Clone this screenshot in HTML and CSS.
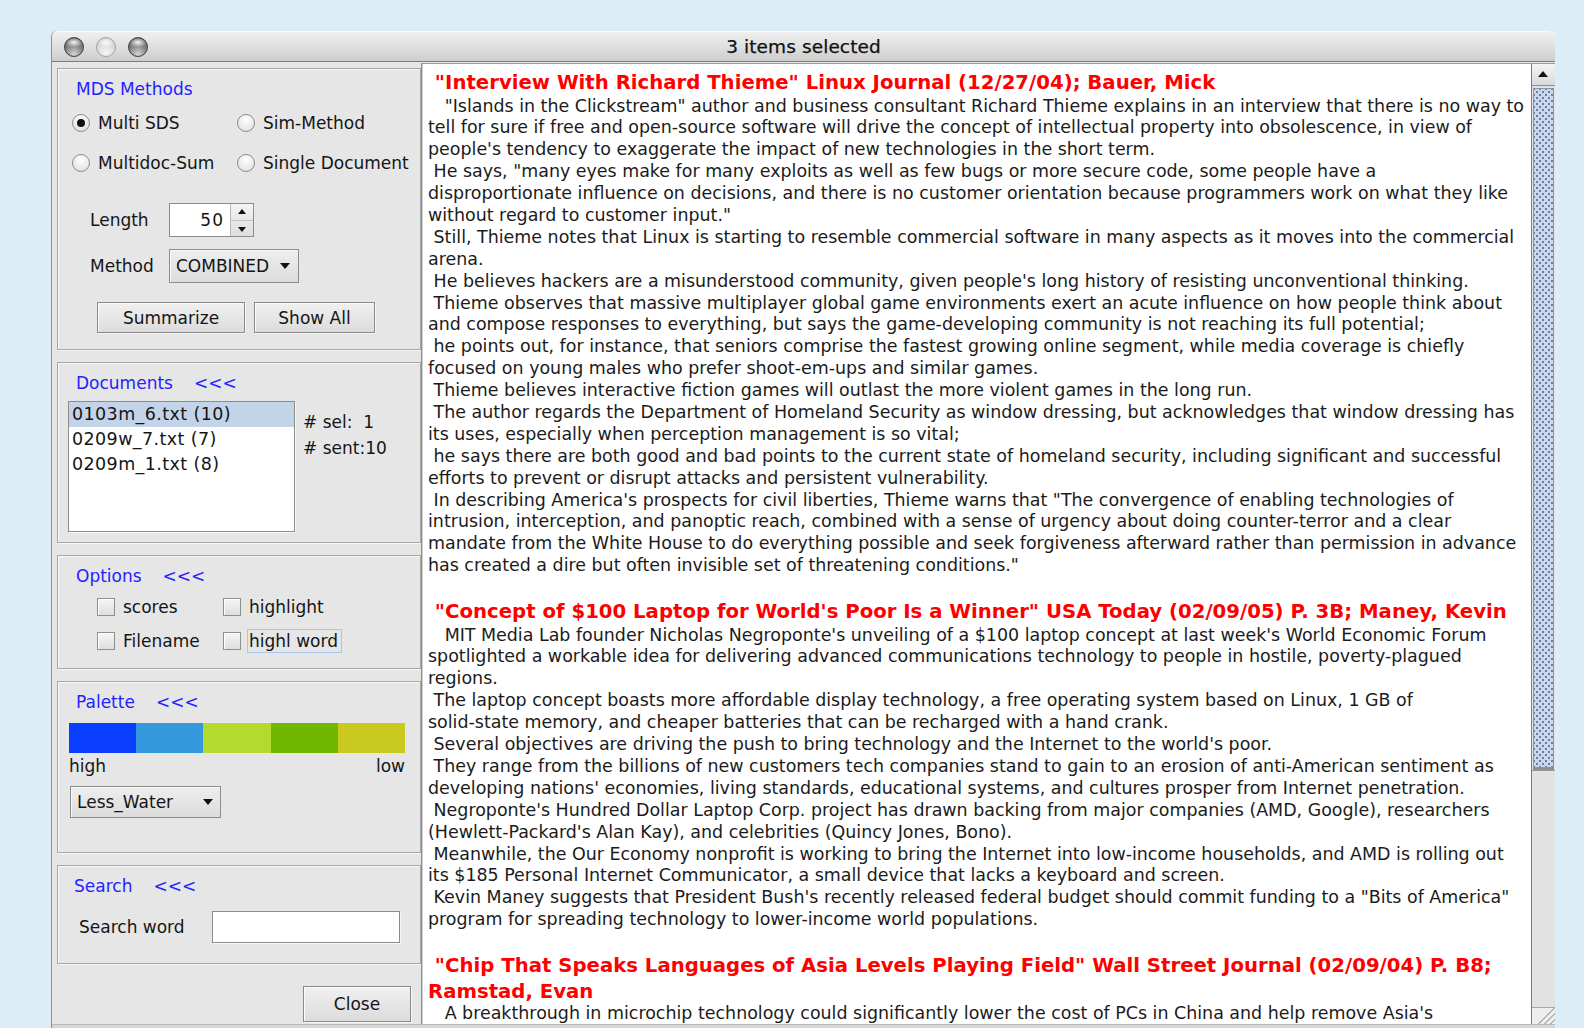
FILE: index.html
```html
<!DOCTYPE html>
<html lang="en">
<head>
<meta charset="utf-8">
<title>3 items selected</title>
<link rel="stylesheet" href="styles.css">
</head>
<body>
<div class="window">
  <header class="titlebar">
    <div class="lights">
      <span class="light light-dark"></span>
      <span class="light light-pale"></span>
      <span class="light light-dark"></span>
    </div>
    <div class="title">3 items selected</div>
  </header>

  <div class="main">
    <aside class="side">
      <section class="group group-mds">
        <div class="group-head"><span>MDS Methods</span></div>
        <div class="radios">
          <label class="radio"><span class="radio-dot is-on"></span>Multi SDS</label>
          <label class="radio"><span class="radio-dot"></span>Sim-Method</label>
          <label class="radio"><span class="radio-dot"></span>Multidoc-Sum</label>
          <label class="radio"><span class="radio-dot"></span>Single Document</label>
        </div>
        <div class="field-row field-first">
          <span class="field-label">Length</span>
          <div class="spinner">
            <span class="spin-value">50</span>
            <span class="spin-btns"><span class="spin-btn spin-up"></span><span class="spin-btn spin-down"></span></span>
          </div>
        </div>
        <div class="field-row">
          <span class="field-label">Method</span>
          <div class="combo combo-method"><span>COMBINED</span><span class="combo-arrow"></span></div>
        </div>
        <div class="actions">
          <button class="btn btn-summarize">Summarize</button>
          <button class="btn btn-showall">Show All</button>
        </div>
      </section>

      <section class="group group-docs">
        <div class="group-head"><span>Documents</span><span>&lt;&lt;&lt;</span></div>
        <div class="docs-body">
          <ul class="doc-list">
            <li class="is-selected">0103m_6.txt (10)</li>
            <li>0209w_7.txt (7)</li>
            <li>0209m_1.txt (8)</li>
          </ul>
          <div class="doc-stats">
            <div class="stat"># sel:  1</div>
            <div class="stat"># sent:10</div>
          </div>
        </div>
      </section>

      <section class="group group-options">
        <div class="group-head"><span>Options</span><span>&lt;&lt;&lt;</span></div>
        <div class="checks">
          <label class="check"><span class="check-box"></span><span>scores</span></label>
          <label class="check"><span class="check-box"></span><span>highlight</span></label>
          <label class="check"><span class="check-box"></span><span>Filename</span></label>
          <label class="check"><span class="check-box"></span><span class="focus-ring">highl word</span></label>
        </div>
      </section>

      <section class="group group-palette">
        <div class="group-head"><span>Palette</span><span>&lt;&lt;&lt;</span></div>
        <div class="palette-bar">
          <span class="swatch sw1"></span>
          <span class="swatch sw2"></span>
          <span class="swatch sw3"></span>
          <span class="swatch sw4"></span>
          <span class="swatch sw5"></span>
        </div>
        <div class="palette-scale"><span>high</span><span>low</span></div>
        <div class="combo combo-palette"><span>Less_Water</span><span class="combo-arrow"></span></div>
      </section>

      <section class="group group-search">
        <div class="group-head head-search"><span>Search</span><span>&lt;&lt;&lt;</span></div>
        <div class="search-row">
          <span class="search-label">Search word</span>
          <span class="search-input"></span>
        </div>
      </section>

      <div class="close-row"><button class="btn btn-close">Close</button></div>
    </aside>

    <div class="pane">
      <div class="doc">
        <div class="hd"> "Interview With Richard Thieme" Linux Journal (12/27/04); Bauer, Mick</div>
        <div class="ln">   "Islands in the Clickstream" author and business consultant Richard Thieme explains in an interview that there is no way to</div>
        <div class="ln">tell for sure if free and open-source software will drive the concept of intellectual property into obsolescence, in view of</div>
        <div class="ln">people's tendency to exaggerate the impact of new technologies in the short term.</div>
        <div class="ln"> He says, "many eyes make for many exploits as well as few bugs or more secure code, some people have a</div>
        <div class="ln">disproportionate influence on decisions, and there is no customer orientation because programmers work on what they like</div>
        <div class="ln">without regard to customer input."</div>
        <div class="ln"> Still, Thieme notes that Linux is starting to resemble commercial software in many aspects as it moves into the commercial</div>
        <div class="ln">arena.</div>
        <div class="ln"> He believes hackers are a misunderstood community, given people's long history of resisting unconventional thinking.</div>
        <div class="ln"> Thieme observes that massive multiplayer global game environments exert an acute influence on how people think about</div>
        <div class="ln">and compose responses to everything, but says the game-developing community is not reaching its full potential;</div>
        <div class="ln"> he points out, for instance, that seniors comprise the fastest growing online segment, while media coverage is chiefly</div>
        <div class="ln">focused on young males who prefer shoot-em-ups and similar games.</div>
        <div class="ln"> Thieme believes interactive fiction games will outlast the more violent games in the long run.</div>
        <div class="ln"> The author regards the Department of Homeland Security as window dressing, but acknowledges that window dressing has</div>
        <div class="ln">its uses, especially when perception management is so vital;</div>
        <div class="ln"> he says there are both good and bad points to the current state of homeland security, including significant and successful</div>
        <div class="ln">efforts to prevent or disrupt attacks and persistent vulnerability.</div>
        <div class="ln"> In describing America's prospects for civil liberties, Thieme warns that "The convergence of enabling technologies of</div>
        <div class="ln">intrusion, interception, and panoptic reach, combined with a sense of urgency about doing counter-terror and a clear</div>
        <div class="ln">mandate from the White House to do everything possible and seek forgiveness afterward rather than permission in advance</div>
        <div class="ln">has created a dire but often invisible set of threatening conditions."</div>
        <div class="gap"></div>
        <div class="hd"> "Concept of $100 Laptop for World's Poor Is a Winner" USA Today (02/09/05) P. 3B; Maney, Kevin</div>
        <div class="ln">   MIT Media Lab founder Nicholas Negroponte's unveiling of a $100 laptop concept at last week's World Economic Forum</div>
        <div class="ln">spotlighted a workable idea for delivering advanced communications technology to people in hostile, poverty-plagued</div>
        <div class="ln">regions.</div>
        <div class="ln"> The laptop concept boasts more affordable display technology, a free operating system based on Linux, 1 GB of</div>
        <div class="ln">solid-state memory, and cheaper batteries that can be recharged with a hand crank.</div>
        <div class="ln"> Several objectives are driving the push to bring technology and the Internet to the world's poor.</div>
        <div class="ln"> They range from the billions of new customers tech companies stand to gain to an erosion of anti-American sentiment as</div>
        <div class="ln">developing nations' economies, living standards, educational systems, and cultures prosper from Internet penetration.</div>
        <div class="ln"> Negroponte's Hundred Dollar Laptop Corp. project has drawn backing from major companies (AMD, Google), researchers</div>
        <div class="ln">(Hewlett-Packard's Alan Kay), and celebrities (Quincy Jones, Bono).</div>
        <div class="ln"> Meanwhile, the Our Economy nonprofit is working to bring the Internet into low-income households, and AMD is rolling out</div>
        <div class="ln">its $185 Personal Internet Communicator, a small device that lacks a keyboard and screen.</div>
        <div class="ln"> Kevin Maney suggests that President Bush's recently released federal budget should commit funding to a "Bits of America"</div>
        <div class="ln">program for spreading technology to lower-income world populations.</div>
        <div class="gap"></div>
        <div class="hd"> "Chip That Speaks Languages of Asia Levels Playing Field" Wall Street Journal (02/09/04) P. B8;</div>
        <div class="hd">Ramstad, Evan</div>
        <div class="ln ln-last">   A breakthrough in microchip technology could significantly lower the cost of PCs in China and help remove Asia's</div>
      </div>
      <div class="vscroll">
        <span class="vs-up"></span>
        <span class="vs-thumb"></span>
        <span class="vs-track"></span>
        <span class="vs-grip"></span>
      </div>
    </div>
  </div>
  <div class="statusline"></div>
</div>
</body>
</html>
```
FILE: styles.css
```css
* { box-sizing: border-box; }

html, body {
  margin: 0;
  padding: 0;
}

body {
  width: 1584px;
  height: 1028px;
  overflow: hidden;
  background: #dcedf8;
  font-family: "DejaVu Sans", "Verdana", sans-serif;
  color: #151515;
}

/* ---- window frame ---- */
.window {
  width: 1504px;
  height: 997px;
  margin: 31px 0 0 51px;
  background: #e6e6e6;
  border-left: 1px solid #8f8f8f;
  border-radius: 6px 6px 0 0;
  display: flex;
  flex-direction: column;
  overflow: hidden;
}

.titlebar {
  position: relative;
  height: 31px;
  flex: none;
  background: linear-gradient(#f0f0f0, #e2e2e2 45%, #cdcdcd);
  border-bottom: 1px solid #7c7c7c;
  border-radius: 6px 6px 0 0;
  box-shadow: inset 0 1px 0 #fafafa;
  display: flex;
  align-items: center;
  justify-content: center;
}

.lights {
  position: absolute;
  left: 12px;
  top: 6px;
  display: flex;
  gap: 12px;
}

.light {
  width: 20px;
  height: 20px;
  border-radius: 50%;
  display: block;
}

.light-dark {
  background:
    radial-gradient(ellipse 50% 28% at 50% 24%, rgba(255,255,255,0.95), rgba(255,255,255,0) 100%),
    radial-gradient(circle at 50% 90%, #d6d6d6 0%, #8a8a8a 45%, #4a4a4a 100%);
  border: 1px solid #3d3d3d;
}

.light-pale {
  background:
    radial-gradient(ellipse 50% 28% at 50% 24%, rgba(255,255,255,0.95), rgba(255,255,255,0) 100%),
    radial-gradient(circle at 50% 85%, #f6f6f6 0%, #dadada 55%, #bcbcbc 100%);
  border: 1px solid #a2a2a2;
}

.title {
  font-size: 18.5px;
  color: #111;
  letter-spacing: 0.1px;
  -webkit-text-stroke: 0.25px #111;
  padding-top: 1px;
}

.main {
  flex: 1;
  display: flex;
  min-height: 0;
}

.statusline {
  height: 4px;
  flex: none;
  background: #d6d6d6;
  border-top: 1px solid #b9b9b9;
}

/* ---- left control column ---- */
.side {
  width: 369px;
  flex: none;
  padding: 6px 0 0 5px;
  font-size: 17px;
  color: #151515;
}

.group {
  width: 364px;
  border: 1px solid #a6a6a6;
  box-shadow: inset 1px 1px 0 #f9f9f9, 1px 1px 0 #f9f9f9;
  padding-top: 10px;
  margin-bottom: 12px;
}

.group-mds { height: 282px; }
.group-docs { height: 181px; }
.group-options { height: 114px; }
.group-palette { height: 172px; }
.group-search { height: 99px; }

.group-head {
  display: flex;
  gap: 21px;
  height: 20px;
  line-height: 20px;
  padding-left: 18px;
  color: #2323ff;
  font-size: 17px;
}

.head-search { padding-left: 16px; }

/* radio buttons */
.radios {
  display: grid;
  grid-template-columns: 165px 165px;
  row-gap: 16px;
  margin: 12px 0 0 14px;
}

.radio {
  display: flex;
  align-items: center;
  gap: 8px;
  height: 24px;
  white-space: nowrap;
}

.radio-dot {
  width: 18px;
  height: 18px;
  border-radius: 50%;
  border: 1px solid #8d8d8d;
  background: radial-gradient(circle at 50% 30%, #ffffff, #e6e6e6 70%, #cfcfcf);
  display: flex;
  align-items: center;
  justify-content: center;
  flex: none;
}

.radio-dot.is-on::after {
  content: "";
  width: 8px;
  height: 8px;
  border-radius: 50%;
  background: #111;
}

/* length / method fields */
.field-row {
  display: flex;
  align-items: center;
  height: 34px;
  margin-top: 12px;
  padding-left: 32px;
}

.field-first { margin-top: 28px; }

.field-label {
  width: 79px;
  flex: none;
}

.spinner {
  width: 85px;
  height: 34px;
  border: 1px solid #8c8c8c;
  background: #fff;
  display: flex;
}

.spin-value {
  flex: 1;
  text-align: right;
  padding-right: 6px;
  line-height: 32px;
  letter-spacing: 1px;
}

.spin-btns {
  width: 23px;
  display: flex;
  flex-direction: column;
  border-left: 1px solid #b6b6b6;
  background: linear-gradient(#f4f4f4, #dedede);
}

.spin-btn {
  flex: 1;
  position: relative;
}

.spin-up { border-bottom: 1px solid #c2c2c2; }

.spin-btn::after {
  content: "";
  position: absolute;
  left: 7px;
  top: 5px;
  border-left: 4px solid transparent;
  border-right: 4px solid transparent;
}

.spin-up::after { border-bottom: 5px solid #111; }
.spin-down::after { border-top: 5px solid #111; top: 6px; }

.combo {
  height: 34px;
  border: 1px solid #8c8c8c;
  background: linear-gradient(#eeeeee, #dcdcdc);
  box-shadow: inset 1px 1px 0 #fafafa;
  display: flex;
  align-items: center;
  justify-content: space-between;
  padding: 0 8px 0 6px;
}

.combo-method { width: 130px; }

.combo-arrow {
  width: 0;
  height: 0;
  border-left: 5px solid transparent;
  border-right: 5px solid transparent;
  border-top: 6px solid #111;
}

/* push buttons */
.actions {
  display: flex;
  gap: 9px;
  margin-top: 19px;
  padding-left: 39px;
}

.btn {
  font: inherit;
  font-size: 17px;
  color: #151515;
  height: 31px;
  border: 1px solid #8a8a8a;
  background: linear-gradient(#f0f0f0, #dcdcdc);
  box-shadow: inset 1px 1px 0 #fbfbfb, 1px 1px 0 #f6f6f6;
  padding: 0;
  margin: 0;
  border-radius: 0;
}

.btn-summarize { width: 148px; }
.btn-showall { width: 121px; }

/* document list */
.docs-body {
  display: flex;
  margin-top: 8px;
  padding-left: 10px;
}

.doc-list {
  list-style: none;
  margin: 0;
  padding: 0;
  width: 227px;
  height: 131px;
  border: 1px solid #8c8c8c;
  background: #fff;
  box-shadow: 1px 1px 0 #f7f7f7;
  font-size: 17.5px;
  letter-spacing: 0.4px;
}

.doc-list li {
  height: 25px;
  line-height: 25px;
  padding-left: 3px;
}

.doc-list li.is-selected { background: #c4d4e8; }

.doc-stats {
  margin-left: 8px;
  padding-top: 8px;
}

.stat {
  line-height: 26px;
  height: 26px;
  white-space: pre;
}

/* option checkboxes */
.checks {
  display: grid;
  grid-template-columns: 126px 126px;
  row-gap: 10px;
  margin-top: 9px;
  padding-left: 39px;
}

.check {
  display: flex;
  align-items: center;
  gap: 8px;
  height: 24px;
  white-space: nowrap;
}

.check-box {
  width: 18px;
  height: 18px;
  flex: none;
  border: 1px solid #8f8f8f;
  background: linear-gradient(#f6f6f6, #dedede);
  box-shadow: inset 1px 1px 0 #ffffff;
}

.focus-ring {
  margin-left: -2px;
  padding: 0 3px 0 1px;
  border: 1px solid #a7c7ef;
  line-height: 22px;
}

/* palette */
.palette-bar {
  display: flex;
  width: 336px;
  height: 30px;
  margin: 11px 0 0 11px;
}

.swatch { flex: 1; }
.sw1 { background: #0a3eff; }
.sw2 { background: #3399dc; }
.sw3 { background: #b4d92f; }
.sw4 { background: #70b800; }
.sw5 { background: #c9c91f; }

.palette-scale {
  display: flex;
  justify-content: space-between;
  width: 336px;
  margin: 3px 0 0 11px;
  line-height: 20px;
}

.combo-palette {
  width: 151px;
  height: 32px;
  margin: 10px 0 0 12px;
  padding-right: 7px;
}

/* search */
.search-row {
  display: flex;
  align-items: center;
  height: 32px;
  margin-top: 15px;
  padding-left: 21px;
}

.search-label {
  width: 133px;
  flex: none;
}

.search-input {
  width: 188px;
  height: 32px;
  border: 1px solid #8c8c8c;
  background: #fff;
  box-shadow: 1px 1px 0 #f7f7f7;
}

.close-row {
  display: flex;
  justify-content: flex-end;
  padding-right: 10px;
  margin-top: 22px;
}

.btn-close {
  width: 108px;
  height: 36px;
}

/* ---- article pane ---- */
.pane {
  flex: 1;
  display: flex;
  margin-top: 1px;
  border-top: 1px solid #9b9b9b;
  border-left: 1px solid #8e8e8e;
  min-width: 0;
}

.doc {
  flex: 1;
  background: #fff;
  padding: 6px 0 0 6px;
  overflow: hidden;
  min-width: 0;
  box-shadow: inset 1px 0 0 #d0d0d0;
}

.ln {
  white-space: pre;
  font-size: 17.45px;
  line-height: 21.9px;
  height: 21.9px;
  color: #1b1b1b;
}

.ln-last {
  line-height: 21px;
  height: 21px;
  margin-top: -1px;
}

.hd {
  white-space: pre;
  font-size: 19.7px;
  font-weight: bold;
  line-height: 25.5px;
  height: 25.5px;
  color: #ff0000;
}

.gap { height: 22px; }

/* vertical scroll bar */
.vscroll {
  width: 24px;
  flex: none;
  display: flex;
  flex-direction: column;
  background: #e2e2e2;
  border-left: 1px solid #7d7d7d;
}

.vs-up {
  height: 22px;
  flex: none;
  position: relative;
  background: linear-gradient(#f4f4f4, #dadada);
  border-bottom: 1px solid #8d8d8d;
}

.vs-up::after {
  content: "";
  position: absolute;
  left: 6px;
  top: 7px;
  border-left: 5px solid transparent;
  border-right: 5px solid transparent;
  border-bottom: 6px solid #111;
}

.vs-thumb {
  height: 680px;
  flex: none;
  margin: 2px 1px 0 1px;
  border: 1px solid #8597b0;
  background-color: #c8d8ee;
  background-image:
    radial-gradient(circle, #6d7f98 0.9px, transparent 1.4px),
    radial-gradient(circle, #6d7f98 0.9px, transparent 1.4px);
  background-size: 6px 6px, 6px 6px;
  background-position: 0 0, 3px 3px;
  box-shadow: 0 2px 0 #8d8d8d;
}

.vs-track {
  flex: 1;
  margin-top: 2px;
  background: #e2e2e2;
  border-top: 1px solid #9a9a9a;
}

.vs-grip {
  height: 17px;
  flex: none;
  background:
    linear-gradient(135deg, transparent 55%, #b5b5b5 55%, #b5b5b5 61%, transparent 61%, transparent 70%, #b5b5b5 70%, #b5b5b5 76%, transparent 76%, transparent 85%, #b5b5b5 85%, #b5b5b5 91%, transparent 91%),
    #eeeeee;
  border-top: 1px solid #a8a8a8;
}
```
